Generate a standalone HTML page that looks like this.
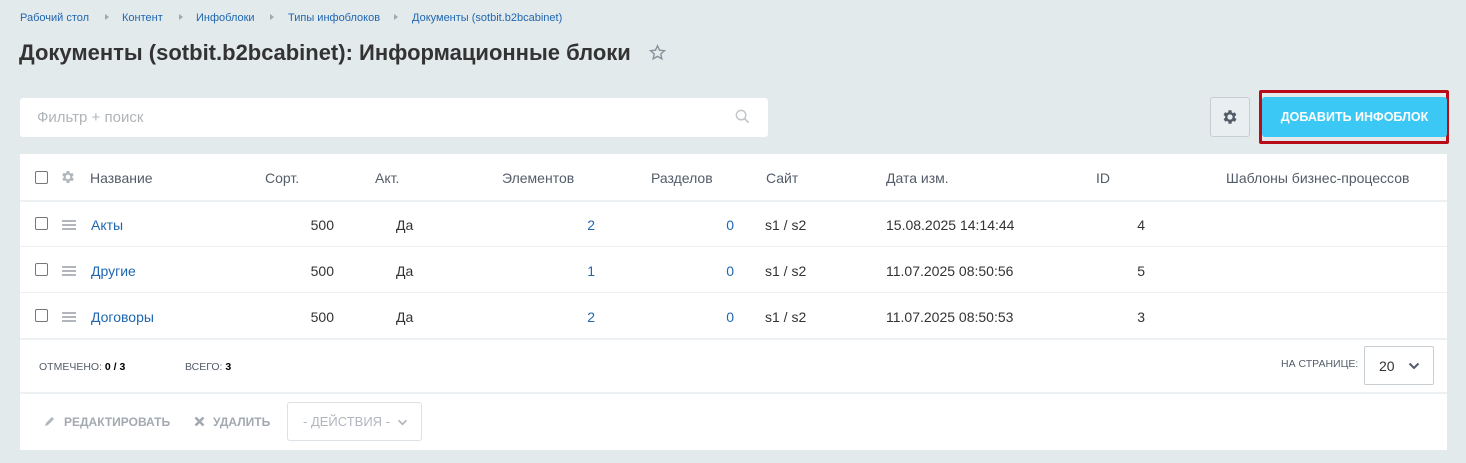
<!DOCTYPE html>
<html><head><meta charset="utf-8"><style>
*{box-sizing:border-box;margin:0;padding:0}
body{width:1466px;height:463px;background:#e3eaec;font-family:"Liberation Sans",sans-serif;position:relative;overflow:hidden;color:#535c69}
.a{position:absolute;white-space:nowrap}
.bc{font-size:11px;color:#2067b0;top:12px}
.arr{position:absolute;top:14px;width:0;height:0;border-left:4px solid #a0a8b0;border-top:3.5px solid transparent;border-bottom:3.5px solid transparent}
h1{position:absolute;left:19px;top:40px;font-size:22px;font-weight:bold;color:#333;white-space:nowrap}
.panel{position:absolute;left:20px;top:154px;width:1427px;height:296px;background:#fff}
.hl{position:absolute;left:0;width:1427px;height:2px;background:#edf1f3}
.th{font-size:14px;color:#535c69;top:170px}
.td{font-size:14px;color:#333;}
.lk{color:#2067b0}
.cb{position:absolute;width:13px;height:13px;border:1px solid #777;border-radius:2px;background:#fff}
.burger{position:absolute;width:14px;height:2px;background:#b0b6bc;box-shadow:0 4px 0 #b0b6bc,0 8px 0 #b0b6bc}
.r{text-align:right}
</style></head><body>
<div class="a bc" style="left:20px">Рабочий стол</div><div class="arr" style="left:105px"></div>
<div class="a bc" style="left:122px">Контент</div><div class="arr" style="left:179px"></div>
<div class="a bc" style="left:196px">Инфоблоки</div><div class="arr" style="left:270px"></div>
<div class="a bc" style="left:288px">Типы инфоблоков</div><div class="arr" style="left:394px"></div>
<div class="a bc" style="left:412px">Документы (sotbit.b2bcabinet)</div>
<h1>Документы (sotbit.b2bcabinet): Информационные блоки</h1>
<svg class="a" style="left:649px;top:44px" width="17" height="17" viewBox="0 0 24 24"><path d="M12 2.5l2.9 6.3 6.9.7-5.2 4.6 1.5 6.8L12 17.4l-6.1 3.5 1.5-6.8-5.2-4.6 6.9-.7z" fill="none" stroke="#8a939c" stroke-width="2"/></svg>
<div class="a" style="left:20px;top:98px;width:748px;height:39px;background:#fff;border-radius:3px"></div>
<div class="a" style="left:37px;top:109px;font-size:15px;color:#b0b4b8">Фильтр + поиск</div>
<svg class="a" style="left:735px;top:109px" width="15" height="15" viewBox="0 0 16 16"><circle cx="6.5" cy="6.5" r="5" fill="none" stroke="#c3c7cb" stroke-width="1.6"/><path d="M10 10l4.5 4.5" stroke="#c3c7cb" stroke-width="1.8"/></svg>
<div class="a" style="left:1210px;top:97px;width:40px;height:40px;border:1px solid #c6cdd3;border-radius:3px;background:#e9eef0"></div>
<svg class="a" style="left:1221px;top:108px" width="18" height="18" viewBox="0 0 24 24"><path fill="#535c69" d="M19.4 13a7.5 7.5 0 000-2l2.1-1.6-2-3.5-2.5 1a7.6 7.6 0 00-1.7-1L15 3h-4l-.4 2.7a7.6 7.6 0 00-1.7 1l-2.5-1-2 3.5L6.6 11a7.5 7.5 0 000 2l-2.1 1.6 2 3.5 2.5-1a7.6 7.6 0 001.7 1L11 21h4l.4-2.7a7.6 7.6 0 001.7-1l2.5 1 2-3.5zM13 15.5a3.5 3.5 0 110-7 3.5 3.5 0 010 7z" transform="translate(-1 0)"/></svg>
<div class="a" style="left:1259px;top:90px;width:190px;height:54px;border:3px solid #b80d18;border-radius:2px"></div>
<div class="a" style="left:1262px;top:97px;width:185px;height:40px;background:#3bc8f5;border-radius:3px;color:#fff;font-weight:bold;font-size:12.5px;text-align:center;line-height:40px">ДОБАВИТЬ ИНФОБЛОК</div>
<div class="panel">
<div class="hl" style="top:46px"></div><div class="hl" style="top:92px;height:1px"></div><div class="hl" style="top:138px;height:1px"></div><div class="hl" style="top:184px"></div><div class="hl" style="top:238px"></div>
</div>
<div class="cb" style="left:35px;top:171px"></div>
<svg class="a" style="left:60px;top:169px" width="16" height="16" viewBox="0 0 24 24"><path fill="#b0b6bc" d="M19.4 13a7.5 7.5 0 000-2l2.1-1.6-2-3.5-2.5 1a7.6 7.6 0 00-1.7-1L15 3h-4l-.4 2.7a7.6 7.6 0 00-1.7 1l-2.5-1-2 3.5L6.6 11a7.5 7.5 0 000 2l-2.1 1.6 2 3.5 2.5-1a7.6 7.6 0 001.7 1L11 21h4l.4-2.7a7.6 7.6 0 001.7-1l2.5 1 2-3.5zM13 15.5a3.5 3.5 0 110-7 3.5 3.5 0 010 7z" transform="translate(-1 0)"/></svg>
<div class="a th" style="left:90px">Название</div>
<div class="a th" style="left:265px">Сорт.</div>
<div class="a th" style="left:375px">Акт.</div>
<div class="a th" style="left:502px">Элементов</div>
<div class="a th" style="left:651px">Разделов</div>
<div class="a th" style="left:766px">Сайт</div>
<div class="a th" style="left:886px">Дата изм.</div>
<div class="a th" style="left:1096px">ID</div>
<div class="a th" style="left:1226px">Шаблоны бизнес-процессов</div>

<div class="cb" style="left:35px;top:217px"></div><div class="burger" style="left:62px;top:220px"></div>
<div class="a td lk" style="left:91px;top:217px">Акты</div>
<div class="a td r" style="left:284px;width:50px;top:217px">500</div>
<div class="a td" style="left:396px;top:217px">Да</div>
<div class="a td lk r" style="left:545px;width:50px;top:217px">2</div>
<div class="a td lk r" style="left:684px;width:50px;top:217px">0</div>
<div class="a td" style="left:765px;top:217px">s1 / s2</div>
<div class="a td" style="left:886px;top:217px">15.08.2025 14:14:44</div>
<div class="a td r" style="left:1095px;width:50px;top:217px">4</div>

<div class="cb" style="left:35px;top:263px"></div><div class="burger" style="left:62px;top:266px"></div>
<div class="a td lk" style="left:91px;top:263px">Другие</div>
<div class="a td r" style="left:284px;width:50px;top:263px">500</div>
<div class="a td" style="left:396px;top:263px">Да</div>
<div class="a td lk r" style="left:545px;width:50px;top:263px">1</div>
<div class="a td lk r" style="left:684px;width:50px;top:263px">0</div>
<div class="a td" style="left:765px;top:263px">s1 / s2</div>
<div class="a td" style="left:886px;top:263px">11.07.2025 08:50:56</div>
<div class="a td r" style="left:1095px;width:50px;top:263px">5</div>

<div class="cb" style="left:35px;top:309px"></div><div class="burger" style="left:62px;top:312px"></div>
<div class="a td lk" style="left:91px;top:309px">Договоры</div>
<div class="a td r" style="left:284px;width:50px;top:309px">500</div>
<div class="a td" style="left:396px;top:309px">Да</div>
<div class="a td lk r" style="left:545px;width:50px;top:309px">2</div>
<div class="a td lk r" style="left:684px;width:50px;top:309px">0</div>
<div class="a td" style="left:765px;top:309px">s1 / s2</div>
<div class="a td" style="left:886px;top:309px">11.07.2025 08:50:53</div>
<div class="a td r" style="left:1095px;width:50px;top:309px">3</div>

<div class="a" style="left:39px;top:361px;font-size:10.5px;color:#535c69">ОТМЕЧЕНО: <b style="color:#000">0 / 3</b></div>
<div class="a" style="left:185px;top:361px;font-size:10.5px;color:#535c69">ВСЕГО: <b style="color:#000">3</b></div>
<div class="a" style="left:1281px;top:358px;font-size:10.5px;color:#535c69">НА СТРАНИЦЕ:</div>
<div class="a" style="left:1364px;top:346px;width:70px;height:39px;border:1px solid #c6cdd3;border-radius:2px"></div>
<div class="a" style="left:1379px;top:358px;font-size:14px;color:#333">20</div>
<svg class="a" style="left:1408px;top:362px" width="12" height="8" viewBox="0 0 12 8"><path d="M1.5 1.5L6 6l4.5-4.5" fill="none" stroke="#535c69" stroke-width="2"/></svg>

<svg class="a" style="left:44px;top:415px" width="12" height="12" viewBox="0 0 12 12"><path d="M1 11l1-3 6-6 2 2-6 6z" fill="#b0b6bc"/></svg>
<div class="a" style="left:64px;top:415px;font-size:12px;font-weight:bold;color:#a3a9b0">РЕДАКТИРОВАТЬ</div>
<svg class="a" style="left:194px;top:416px" width="11" height="11" viewBox="0 0 11 11"><path d="M1.5 1.5l8 8M9.5 1.5l-8 8" stroke="#a3a9b0" stroke-width="2.6"/></svg>
<div class="a" style="left:213px;top:415px;font-size:12px;font-weight:bold;color:#a3a9b0">УДАЛИТЬ</div>
<div class="a" style="left:287px;top:402px;width:135px;height:39px;border:1px solid #dde2e6;border-radius:3px"></div>
<div class="a" style="left:303px;top:414px;font-size:13px;color:#b0b6bc">- ДЕЙСТВИЯ -</div>
<svg class="a" style="left:397px;top:419px" width="11" height="7" viewBox="0 0 12 8"><path d="M1.5 1.5L6 6l4.5-4.5" fill="none" stroke="#b0b6bc" stroke-width="2"/></svg>
</body></html>
